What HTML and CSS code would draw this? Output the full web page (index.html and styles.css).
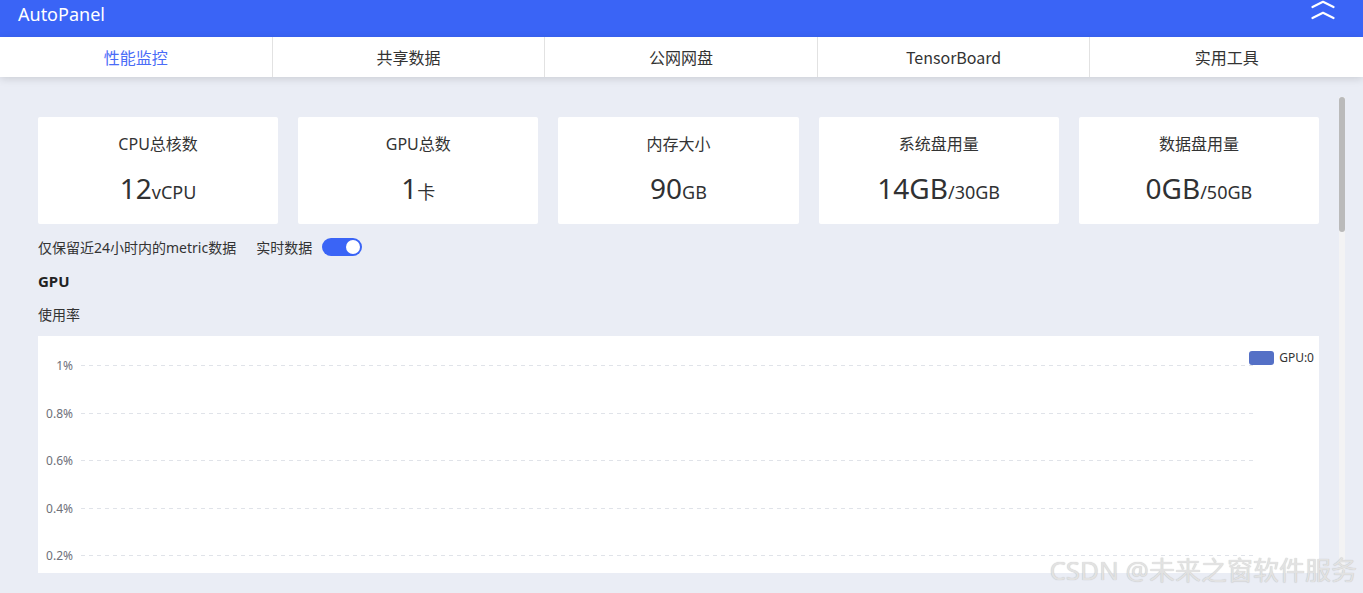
FILE: index.html
```html
<!DOCTYPE html>
<html lang="zh-CN">
<head>
<meta charset="utf-8">
<title>AutoPanel</title>
<link rel="stylesheet" href="styles.css">
</head>
<body>
<header class="topbar">
  <span class="brand">AutoPanel</span>
  <button class="collapse" aria-label="收起">
    <svg width="24" height="20" viewBox="0 0 24 20" fill="none" stroke="#fff" stroke-width="2.2" stroke-linecap="round" stroke-linejoin="round">
      <path d="M1.5 7 L12 1.8 L22.5 7"/>
      <path d="M1.5 18 L12 12.8 L22.5 18"/>
    </svg>
  </button>
</header>
<nav class="tabs">
  <a class="tab active">性能监控</a>
  <a class="tab">共享数据</a>
  <a class="tab">公网网盘</a>
  <a class="tab">TensorBoard</a>
  <a class="tab">实用工具</a>
</nav>
<main class="frame">
  <div class="scroller">
    <section class="stats">
      <div class="stat"><div class="stat-title">CPU总核数</div><div class="stat-value"><span class="num">12</span><span class="unit">vCPU</span></div></div>
      <div class="stat"><div class="stat-title">GPU总数</div><div class="stat-value"><span class="num">1</span><span class="unit">卡</span></div></div>
      <div class="stat"><div class="stat-title">内存大小</div><div class="stat-value"><span class="num">90</span><span class="unit">GB</span></div></div>
      <div class="stat"><div class="stat-title">系统盘用量</div><div class="stat-value"><span class="num">14GB</span><span class="unit">/30GB</span></div></div>
      <div class="stat"><div class="stat-title">数据盘用量</div><div class="stat-value"><span class="num">0GB</span><span class="unit">/50GB</span></div></div>
    </section>

    <div class="controls">
      <span class="note">仅保留近24小时内的metric数据</span>
      <span class="realtime">实时数据</span>
      <span class="switch on"><span class="knob"></span></span>
    </div>

    <h3 class="group-title">GPU</h3>

    <div class="chart-label">使用率</div>
    <div class="chart">
      <div class="legend"><span class="swatch"></span><span>GPU:0</span></div>
      <div class="plot">
        <div class="row"><span class="tick">1%</span><span class="grid-line"></span></div>
        <div class="row"><span class="tick">0.8%</span><span class="grid-line"></span></div>
        <div class="row"><span class="tick">0.6%</span><span class="grid-line"></span></div>
        <div class="row"><span class="tick">0.4%</span><span class="grid-line"></span></div>
        <div class="row"><span class="tick">0.2%</span><span class="grid-line"></span></div>
      </div>
    </div>
  </div>
  <div class="scroll-track"><div class="scroll-thumb"></div></div>
</main>
<div class="watermark">CSDN @未来之窗软件服务</div>
</body>
</html>
```
FILE: styles.css
```css
* { box-sizing: border-box; }

html, body {
  margin: 0;
  height: 100%;
}

body {
  font-family: "Noto Sans", "Noto Sans CJK SC", sans-serif;
  color: #333;
  background: #eaedf5;
  overflow: hidden;
  position: relative;
}

.topbar {
  height: 37px;
  background: #3a64f6;
  display: flex;
  justify-content: space-between;
  align-items: flex-start;
  padding: 0 28px 0 18px;
}

.brand {
  color: #fff;
  font-size: 18px;
  line-height: 28px;
}

.collapse {
  border: 0;
  background: transparent;
  padding: 0;
  display: flex;
  cursor: pointer;
}

.tabs {
  display: grid;
  grid-template-columns: repeat(5, 1fr);
  height: 40px;
  background: #fff;
  box-shadow: 0 2px 8px rgba(0, 0, 0, 0.13);
  position: relative;
  z-index: 1;
}

.tab {
  display: flex;
  align-items: center;
  justify-content: center;
  padding-bottom: 1px;
  font-family: "Noto Sans CJK SC", "Noto Sans", sans-serif;
  font-size: 16px;
  color: #333;
  border-right: 1px solid #e2e2e2;
  cursor: pointer;
}

.tab:last-child { border-right: 0; }

.tab.active { color: #4a6cf7; }

.frame {
  height: calc(100% - 77px);
  padding: 20px 18px 20px 0;
  display: flex;
}

.scroller {
  flex: 1;
  min-width: 0;
  height: 100%;
  overflow-y: auto;
  scrollbar-width: none;
  padding: 20px 20px 20px 38px;
}

.scroller::-webkit-scrollbar { display: none; }

.scroll-track {
  width: 6px;
  height: 100%;
  background: #f3f3f4;
}

.scroll-thumb {
  height: 135px;
  border-radius: 3px;
  background: #bababa;
}

.stats {
  display: grid;
  grid-template-columns: repeat(5, 1fr);
  gap: 20px;
}

.stat {
  background: #fff;
  border-radius: 2px;
  height: 107px;
  padding-top: 17px;
  text-align: center;
}

.stat-title {
  font-size: 16px;
  line-height: 20px;
  color: #333;
}

.stat-value {
  margin-top: 16px;
  line-height: 36px;
  color: #303133;
}

.stat-value .num { font-size: 28px; }
.stat-value .unit { font-size: 18px; }

.controls {
  margin-top: 13px;
  height: 20px;
  display: flex;
  align-items: center;
  font-size: 14px;
}

.note { margin-right: 20px; }

.realtime { margin-right: 10px; }

.switch {
  width: 40px;
  height: 18px;
  border-radius: 9px;
  background: #3a64f6;
  display: flex;
  align-items: center;
  justify-content: flex-end;
  padding: 0 2px;
}

.knob {
  width: 14px;
  height: 14px;
  border-radius: 50%;
  background: #fff;
}

.group-title {
  margin: 14px 0 0;
  font-size: 15px;
  font-weight: 700;
  line-height: 20px;
  color: #222;
}

.chart-label {
  margin-top: 14px;
  font-size: 14px;
  line-height: 20px;
}

.chart {
  margin-top: 11px;
  height: 312px;
  background: #fff;
  position: relative;
  padding: 6px 65px 0 0;
}

.legend {
  position: absolute;
  top: 13px;
  right: 5px;
  display: flex;
  align-items: center;
  gap: 5px;
  font-size: 12px;
  color: #333;
}

.swatch {
  width: 25px;
  height: 14px;
  border-radius: 3px;
  background: #5470c6;
}

.row {
  height: 47.5px;
  display: flex;
  align-items: center;
}

.tick {
  width: 35px;
  text-align: right;
  font-size: 12px;
  color: #6e7079;
}

.grid-line {
  flex: 1;
  margin-left: 8px;
  height: 1px;
  background: repeating-linear-gradient(to right, #e0e3e9 0 4px, transparent 4px 8px);
}

.watermark {
  position: absolute;
  right: 6px;
  bottom: 8px;
  font-size: 26px;
  line-height: 30px;
  color: #e2e2e2;
  text-shadow: 0 0 1px rgba(0, 0, 0, 0.24);
  pointer-events: none;
  white-space: nowrap;
}
```
